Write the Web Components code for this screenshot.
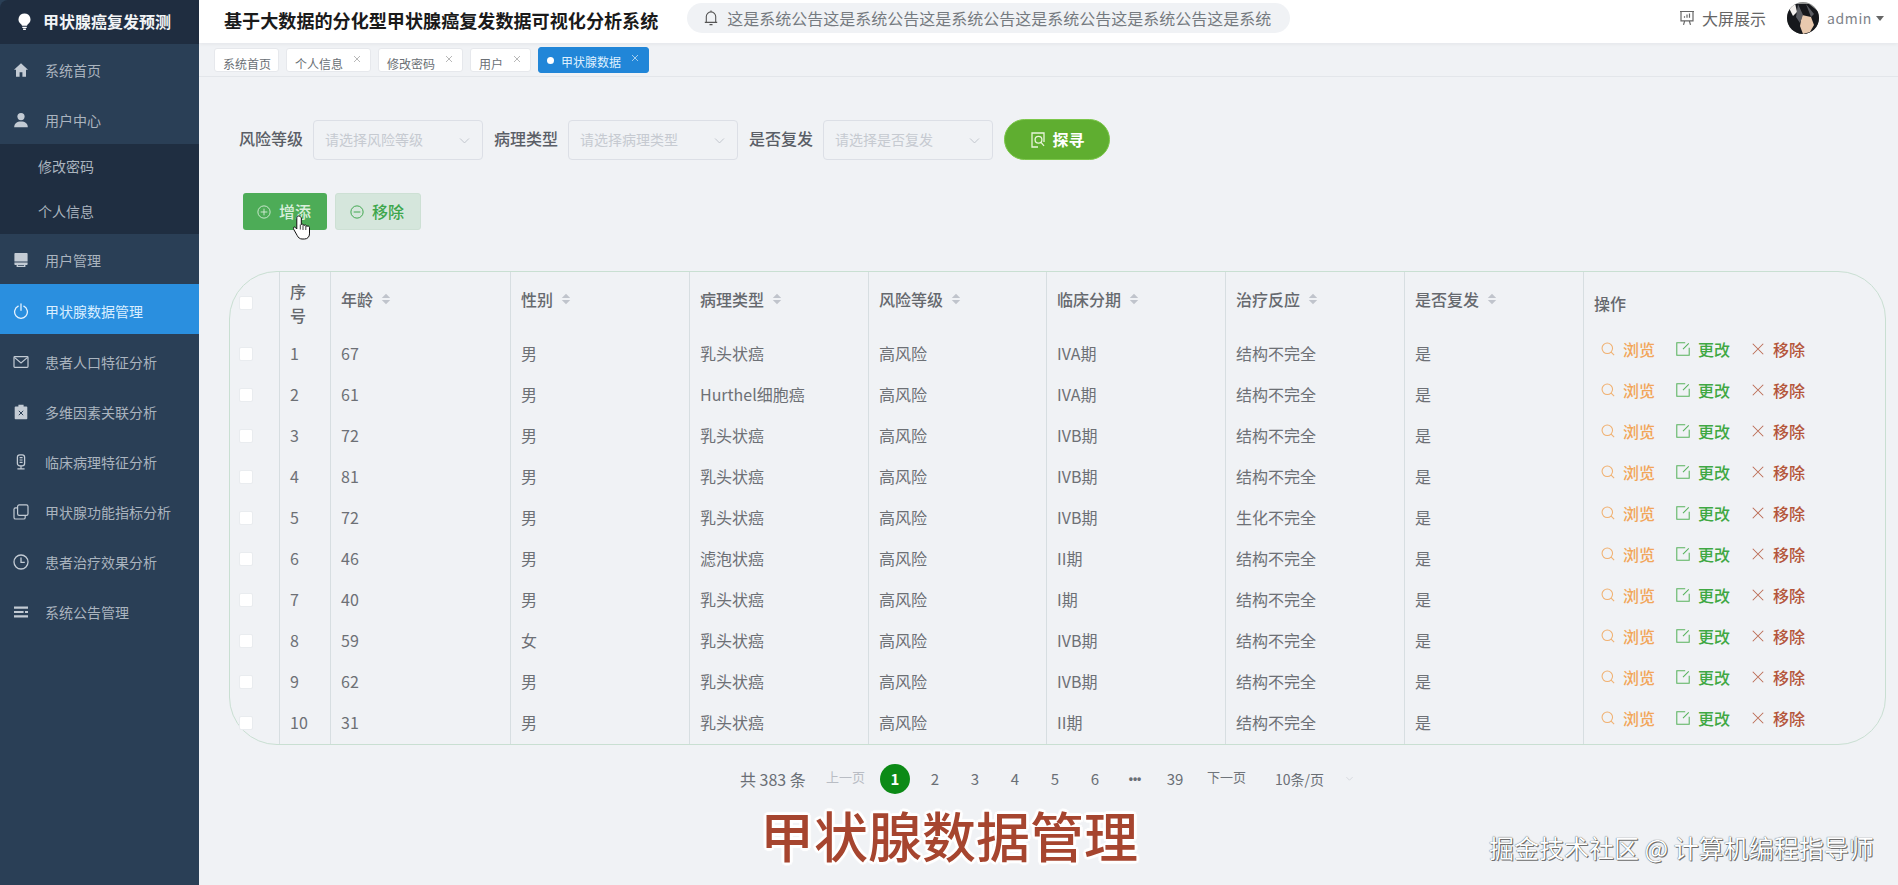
<!DOCTYPE html>
<html lang="zh-CN"><head><meta charset="utf-8"><title>甲状腺癌复发预测</title>
<style>
html,body{margin:0;padding:0;height:100%;overflow:hidden;background:#f0f2f5}
body{font-family:"Noto Sans CJK SC","Noto Sans",sans-serif}
</style></head><body>
<app-shell></app-shell>
<script>
const ICONS={
home:'<path fill="currentColor" d="M8 1.2 1 7.8h2v6.9h3.6v-4.4h2.8v4.4H13V7.8h2z"/>',
user:'<circle fill="currentColor" cx="8" cy="4.6" r="3.6"/><path fill="currentColor" d="M1.2 15.2c0-4 2.8-5.8 6.8-5.8s6.8 1.8 6.8 5.8z"/>',
box:'<path fill="currentColor" d="M2.4 1h11.2c.6 0 1 .4 1 1v7.4H1.4V2c0-.6.4-1 1-1z"/><path fill="currentColor" d="M1.4 10.4h13.2v1.6c0 .6-.4 1-1 1h-1.2v2H3.6v-2H2.4c-.6 0-1-.4-1-1zM5 13v.8h6V13z"/>',
power:'<path fill="none" stroke="currentColor" stroke-width="1.3" stroke-linecap="round" d="M5.2 3.2a6.4 6.4 0 1 0 5.6 0M8 .9v6.4"/>',
mail:'<rect fill="none" stroke="currentColor" stroke-width="1.2" x="1" y="2.6" width="14" height="10.8" rx=".8"/><path fill="none" stroke="currentColor" stroke-width="1.2" d="M1.4 3.4 8 9l6.6-5.6"/>',
clip:'<path fill="currentColor" d="M5.4.8h5.2v1.6h2.9c.4 0 .8.4.8.8v11.2c0 .4-.4.8-.8.8h-11c-.4 0-.8-.4-.8-.8V3.2c0-.4.4-.8.8-.8h2.9z"/><path fill="none" stroke="#2a3f56" stroke-width="1" d="m5.8 6.8 4.4 4.4m0-4.4-4.4 4.4"/>',
mic:'<rect fill="none" stroke="currentColor" stroke-width="1.3" x="4.4" y=".8" width="7.2" height="11" rx="2.4"/><path fill="none" stroke="currentColor" stroke-width="1.2" d="M6.6 3.6h3M6.6 6h3M6.6 8.4h3M8 11.8v2.4M4.4 14.8h7.2"/>',
copy:'<rect fill="none" stroke="currentColor" stroke-width="1.2" x="4.6" y=".9" width="10.4" height="10.4" rx="1.6"/><path fill="none" stroke="currentColor" stroke-width="1.2" d="M4.6 3.8H2.6C1.7 3.8 1 4.5 1 5.4v8c0 .9.7 1.6 1.6 1.6h8c.9 0 1.6-.7 1.6-1.6v-2"/>',
clock:'<circle fill="none" stroke="currentColor" stroke-width="1.3" cx="8" cy="8" r="7"/><path fill="none" stroke="currentColor" stroke-width="1.3" d="M8 3.6V8.4h3.8"/>',
bars:'<path fill="currentColor" d="M1 2.6h14v2.2H1zM1 6.9h9.6v2.2H1zM12 6.9h3v2.2h-3zM1 11.2h14v2.2H1z"/>',
bell:'<path fill="none" stroke="currentColor" stroke-width="1.1" d="M3.3 12V6.6a4.7 4.7 0 0 1 9.4 0V12M1.8 12.4h12.4M8 1.9V.6M6.5 14.6h3"/>',
board:'<path fill="none" stroke="currentColor" stroke-width="1.2" d="M1 1.5h14M2 1.5v9.3h12V1.5M5.7 10.8l-1.2 4M10.3 10.8l1.2 4M5.5 7.8V6.3M8 7.8V4.5M10.5 7.8V3.5"/>',
find:'<path fill="none" stroke="currentColor" stroke-width="1.3" d="M11 1H2v14h6M11 1h3v9"/><circle fill="none" stroke="currentColor" stroke-width="1.3" cx="8.5" cy="7.8" r="3.4"/><path stroke="currentColor" stroke-width="1.3" d="m11 10.3 3 3.5"/>',
plus:'<circle fill="none" stroke="currentColor" stroke-width="1" cx="8" cy="8" r="7"/><path stroke="currentColor" stroke-width="1" d="M8 4.2v7.6M4.2 8h7.6"/>',
minus:'<circle fill="none" stroke="currentColor" stroke-width="1.1" cx="8" cy="8" r="7"/><path stroke="currentColor" stroke-width="1.1" d="M4.2 8h7.6"/>',
search:'<circle fill="none" stroke="currentColor" stroke-width="1.2" cx="7.2" cy="7.2" r="6"/><path stroke="currentColor" stroke-width="1.2" d="m11.6 11.6 3.4 3.4"/>',
edit:'<path fill="none" stroke="currentColor" stroke-width="1.2" d="M10.5.9H.9v14.2h14.2V6.5M14.6 1.6 8 8.2"/>',
close:'<path stroke="currentColor" stroke-width="1.2" d="m2 2 12 12M14 2 2 14"/>',
chev:'<path fill="none" stroke="currentColor" stroke-width="1.2" d="m2.5 5.5 5.5 5.5 5.5-5.5"/>',
bulb:'<path fill="currentColor" d="M8 .4a5.6 5.6 0 0 0-3.2 10.2c.5.4.8.9.8 1.5h4.800c0-.6.3-1.100.8-1.500A5.600 5.600 0 0 0 8 .4z"/><path fill="currentColor" d="M5.900 12.900h4.200v1.100H5.900zM6.700 14.700h2.600V16H6.700z"/>'
};
function def(tag,css,html,init){
  customElements.define(tag,class extends HTMLElement{
    connectedCallback(){
      if(this.shadowRoot)return;
      const r=this.attachShadow({mode:'open'});
      r.innerHTML='<style>'+css+'</style>'+(typeof html==='function'?html(this):html);
      if(init)init(this,r);
    }
  });
}
def('ui-icon',':host{display:inline-flex;width:var(--s,16px);height:var(--s,16px);flex:none}svg{width:100%;height:100%;display:block}',
  h=>`<svg viewBox="0 0 16 16">${ICONS[h.getAttribute('name')]||''}</svg>`);

def('side-item',`:host{display:flex;align-items:center;height:50px;box-sizing:border-box;padding:2px 0 0 13px;color:#aab4bf;font-size:14px;cursor:pointer}
:host([active]){background:#2a8fdf;color:#d9eeff;padding-top:4px}
:host([gap]){margin-top:2px}
:host([sub]){height:45px;padding:0 0 2px 38px;background:#1f2e41}
ui-icon{color:#c3cbd4;margin-right:16px}
:host([active]) ui-icon{color:#e4f2ff}`,
 h=>(h.hasAttribute('sub')?'':`<ui-icon name="${h.getAttribute('icon')}"></ui-icon>`)+'<slot></slot>');

def('side-nav',`:host{display:block;width:199px;flex:none;background:#2a3f56;height:100%}
.logo{height:44px;box-sizing:border-box;background:#1f2d40;border-top-left-radius:8px;display:flex;align-items:center;padding:0 0 2px 16px;color:#f2f4f6;font-size:16px;font-weight:700}
ui-icon{color:#fff;margin-right:10px;--s:17px}`,
`<div class="logo"><ui-icon name="bulb"></ui-icon>甲状腺癌复发预测</div>
<side-item icon="home">系统首页</side-item>
<side-item icon="user">用户中心</side-item>
<side-item sub>修改密码</side-item>
<side-item sub>个人信息</side-item>
<side-item icon="box">用户管理</side-item>
<side-item icon="power" active>甲状腺数据管理</side-item>
<side-item icon="mail" gap>患者人口特征分析</side-item>
<side-item icon="clip">多维因素关联分析</side-item>
<side-item icon="mic">临床病理特征分析</side-item>
<side-item icon="copy">甲状腺功能指标分析</side-item>
<side-item icon="clock">患者治疗效果分析</side-item>
<side-item icon="bars">系统公告管理</side-item>`);

def('top-bar',`:host{display:flex;height:43px;box-sizing:border-box;background:#fff;box-shadow:0 1px 4px rgba(0,21,41,.06);position:relative;padding-left:25px;color:#666}
.t{font-size:18.1px;font-weight:700;color:#1a1a1a;line-height:40px;white-space:nowrap}
.n{margin:3px 0 0 29px;width:603px;height:30px;box-sizing:border-box;border-radius:15px;background:#f0f2f5;display:flex;align-items:center;padding-left:16px;font-size:16px;color:#757a80;overflow:hidden;white-space:nowrap}
.n ui-icon{margin-right:8px;color:#555}
.r{margin-left:auto;display:flex;align-items:center;height:36px;padding-right:14px;font-size:16px;color:#666}
.r .b{margin-right:7px;color:#666}
.av{width:32px;height:32px;margin-left:21px;margin-right:8px;flex:none}
.ad{font-size:14px;letter-spacing:.6px;color:#7d8288}
.c{width:0;height:0;border:4px solid transparent;border-top:5px solid #666;border-bottom:0;margin-left:4px}`,
`<div class="t">基于大数据的分化型甲状腺癌复发数据可视化分析系统</div>
<div class="n"><ui-icon name="bell"></ui-icon>这是系统公告这是系统公告这是系统公告这是系统公告这是系统公告这是系统</div>
<div class="r"><ui-icon class="b" name="board"></ui-icon>大屏展示
<svg class="av" viewBox="0 0 32 32"><defs><clipPath id="c"><circle cx="16" cy="16" r="16"/></clipPath></defs><g clip-path="url(#c)"><rect width="32" height="32" fill="#8d8f8e"/><path fill="#16181c" d="M0 32V8L8 2h14l10 8v22z"/><path fill="#e8c9ae" d="M15 13l9 2 3 8-4 7-7 2-3-8z"/><path fill="#f4f1ee" d="M2 6 8 1l2 9-4 4z"/><path fill="#5a5c62" d="M11 2l5 11-3 8-4-6zM19 2l5 13 3-3z"/></g></svg>
<span class="ad">admin</span><i class="c"></i></div>`);

def('tag-chip',`:host{display:flex;box-sizing:border-box;height:24px;margin-top:5px;background:#fff;border:1px solid #e6e8ec;border-radius:3px;padding:4px 0 0 8px;font-size:12px;line-height:22px;color:#6a6f75;white-space:nowrap}
:host([active]){height:26px;margin-top:4px;background:#2186d8;border-color:#2186d8;color:#dff0ff;padding:3px 0 0 8px}
:host([plain]){padding-right:7px}
.d{width:7px;height:7px;border-radius:50%;background:#fff;margin:6px 7px 0 0}
ui-icon{--s:8px;color:#888;margin:2px 9px 0 10px}
:host([active]) ui-icon{color:#fff;margin-top:3px}`,
 h=>(h.hasAttribute('active')?'<i class="d"></i>':'')+'<span><slot></slot></span>'+(h.hasAttribute('plain')?'':'<ui-icon name="close"></ui-icon>'));

def('tag-bar',`:host{display:flex;height:34px;box-sizing:border-box;border-bottom:1px solid #e3e6ea;padding-left:15px;gap:7px;background:#f0f2f5}`,
`<tag-chip plain>系统首页</tag-chip><tag-chip>个人信息</tag-chip><tag-chip>修改密码</tag-chip><tag-chip>用户</tag-chip><tag-chip active>甲状腺数据</tag-chip>`);

def('f-select',`:host{display:flex;align-items:center;justify-content:space-between;width:170px;height:40px;box-sizing:border-box;border:1px solid #dcdfe6;border-radius:4px;padding:0 11px 1px;font-size:14px;color:#c6cad1;white-space:nowrap}
ui-icon{--s:13px;color:#c0c4cc;margin-top:2px}`,
`<slot></slot><ui-icon name="chev"></ui-icon>`);

def('filter-bar',`:host{display:flex;align-items:center;margin:42px 0 0 40px;height:41px;font-size:16px;color:#5a5e66;font-weight:500}
label{margin-right:10px;white-space:nowrap;padding-bottom:3px}
f-select{margin-right:11px;font-weight:400}
button{margin-left:0;width:106px;height:41px;box-sizing:border-box;border-radius:21px;background:#5fae30;border:1px solid #7cc74a;color:#fff;font:700 16px "Noto Sans CJK SC",sans-serif;display:flex;align-items:center;justify-content:center;gap:7px;padding:0 0 2px}
ui-icon{color:#e8f5da;margin-top:2px}`,
`<label>风险等级</label><f-select>请选择风险等级</f-select><label>病理类型</label><f-select>请选择病理类型</f-select><label>是否复发</label><f-select>请选择是否复发</f-select><button><ui-icon name="find"></ui-icon>探寻</button>`);

def('tool-bar',`:host{display:flex;gap:8px;margin:33px 0 0 44px;height:37px;position:relative}
.b{box-sizing:border-box;width:85px;height:37px;border-radius:3px;display:flex;align-items:center;padding:0 0 2px 14px;gap:8px;font-size:16px;font-weight:500}
.a{background:#4dac57;color:#d9efdc;width:84px}
.d{background:#d5e6dc;border:1px solid #cde0d4;color:#3da64c;width:86px}
ui-icon{--s:14px;margin-top:2px}
.cur{position:absolute;left:50px;top:22px;width:17px;height:25px}`,
`<div class="b a"><ui-icon name="plus"></ui-icon>增添</div><div class="b d"><ui-icon name="minus"></ui-icon>移除</div>
<svg class="cur" viewBox="0 0 17 25"><path fill="#fff" stroke="#111" stroke-width="1" stroke-linejoin="round" d="M5.5 1C4.5 1 3.8 1.7 3.8 2.7V14L2.5 12.6C1.7 11.8.7 11.9.5 12.6.2 13.3.5 14 .9 14.7L4.2 20.5C5.2 22.6 6.8 24 9 24h2.5c2.9 0 5-2.2 5-5.1v-6.3c0-.9-.7-1.6-1.5-1.6-.5 0-.9.2-1.2.5 0-.9-.7-1.5-1.5-1.5-.6 0-1 .2-1.3.6-.1-.9-.7-1.4-1.5-1.4-.5 0-.9.1-1.2.4V2.7C7.3 1.700 6.500 1 5.500 1z"/><path fill="none" stroke="#111" stroke-width=".8" d="M7.3 9.5v5M10 10.2v4.800M12.800 11v4"/></svg>`);

const ROWS=[[67,'男','乳头状癌','IVA期','结构不完全'],[61,'男','Hurthel细胞癌','IVA期','结构不完全'],[72,'男','乳头状癌','IVB期','结构不完全'],[81,'男','乳头状癌','IVB期','结构不完全'],[72,'男','乳头状癌','IVB期','生化不完全'],[46,'男','滤泡状癌','II期','结构不完全'],[40,'男','乳头状癌','I期','结构不完全'],[59,'女','乳头状癌','IVB期','结构不完全'],[62,'男','乳头状癌','IVB期','结构不完全'],[31,'男','乳头状癌','II期','结构不完全']];
const sort='<svg class="s" viewBox="0 0 10 12"><path fill="#c0c4cc" d="M5 .8 9.2 5H.8zM5 11.2.8 7h8.4z"/></svg>';
const th=t=>`<th class="sh"><div class="h">${t}${sort}</div></th>`;
def('act-link',`:host{display:inline-flex;align-items:center;gap:8px;font-size:16px;font-weight:500;color:var(--c);white-space:nowrap}
ui-icon{--s:14px;opacity:.85}`,h=>`<ui-icon name="${h.getAttribute('icon')}"></ui-icon><slot></slot>`);
def('check-box',`:host{display:block;width:14px;height:14px;box-sizing:border-box;background:#fff;border:1px solid #e9ecef;border-radius:2px}`,'');
def('data-table',`:host{display:block;margin:41px 0 0 30px;width:1657px;box-sizing:border-box;border:1px solid #c9dfd2;border-radius:48px;color:#6d7075;font-size:16px}
table{border-collapse:separate;border-spacing:0;table-layout:fixed;width:100%}
th,td{padding:0 10px 2px;text-align:left;border-left:1px solid #d7dee1;height:41.1px;box-sizing:border-box;font-weight:400;white-space:nowrap}
th{height:61px;color:#66696e;font-weight:500;line-height:24px;white-space:normal;padding:0 10px}
tr>*:first-child{border-left:0;padding:0 0 0 9px}
.h{display:flex;align-items:center;gap:8px;padding-bottom:7px}
.s{width:10px;height:12px;flex:none}
td.a{padding:0 0 10px 17px}
act-link+act-link{margin-left:21px}`,
()=>`<table><colgroup><col style="width:49px"><col style="width:51px"><col style="width:180px"><col style="width:179px"><col style="width:179px"><col style="width:178px"><col style="width:179px"><col style="width:179px"><col style="width:179px"><col></colgroup>
<thead><tr><th><check-box></check-box></th><th>序号</th>${['年龄','性别','病理类型','风险等级','临床分期','治疗反应','是否复发'].map(th).join('')}<th>操作</th></tr></thead>
<tbody>${ROWS.map((r,i)=>`<tr><td><check-box></check-box></td><td>${i+1}</td><td>${r[0]}</td><td>${r[1]}</td><td>${r[2]}</td><td>高风险</td><td>${r[3]}</td><td>${r[4]}</td><td>是</td><td class="a"><act-link icon="search" style="--c:#f2a65a">浏览</act-link><act-link icon="edit" style="--c:#3fa843">更改</act-link><act-link icon="close" style="--c:#b4553a">移除</act-link></td></tr>`).join('')}</tbody></table>`);

def('page-bar',`:host{display:flex;align-items:center;height:30px;margin:19px 0 0 541px;font-size:15px;color:#6a6f75;white-space:nowrap}
.tot{margin-right:21px;width:65px;font-size:16px;white-space:nowrap}
.nav{font-size:13px;color:#6f747a;margin-top:-4px}
.nav.off{color:#b9bdc4;margin-right:15px}
.p{width:30px;text-align:center;margin-right:10px}
.on{height:30px;line-height:30px;border-radius:50%;background:#0c8a16;color:#fff;font-weight:700}
.dots{font:700 12px "Liberation Sans",sans-serif}
.sz{margin-left:29px;font-size:14px;width:52px}
ui-icon{--s:9px;color:#c9ccd2;margin-left:18px}`,
`<span class="tot">共 383 条</span><span class="nav off">上一页</span><span class="p on">1</span><span class="p">2</span><span class="p">3</span><span class="p">4</span><span class="p">5</span><span class="p">6</span><span class="p dots">•••</span><span class="p">39</span><span class="nav" style="margin-left:7px">下一页</span><span class="sz">10条/页</span><ui-icon name="chev"></ui-icon>`);

def('main-pane',`:host{display:block;flex:1;min-width:0;height:100%}`,
`<top-bar></top-bar><tag-bar></tag-bar><filter-bar></filter-bar><tool-bar></tool-bar><data-table></data-table><page-bar></page-bar>`);

const halo=[];for(const[x,y]of[[3,0],[-3,0],[0,3],[0,-3],[2,2],[-2,2],[2,-2],[-2,-2]])halo.push(`${x}px ${y}px 1px #fff`);
def('video-caption',`:host{position:absolute;left:760px;top:798px;font-size:54px;line-height:74px;font-weight:500;color:#a6452f;white-space:nowrap;text-shadow:${halo.join(',')}}`,'<slot></slot>');
def('video-mark',`:host{position:absolute;left:1489px;top:829px;font-size:25px;line-height:36px;color:#fff;white-space:nowrap;text-shadow:0 0 1px #222,1px 1px 0 #777}`,'<slot></slot>');

def('app-shell',`:host{display:flex;height:885px;width:1898px;position:relative;background:#f0f2f5}`,
`<side-nav></side-nav><main-pane></main-pane><video-caption>甲状腺数据管理</video-caption><video-mark>掘金技术社区 @ 计算机编程指导师</video-mark>`);
</script>
</body></html>
